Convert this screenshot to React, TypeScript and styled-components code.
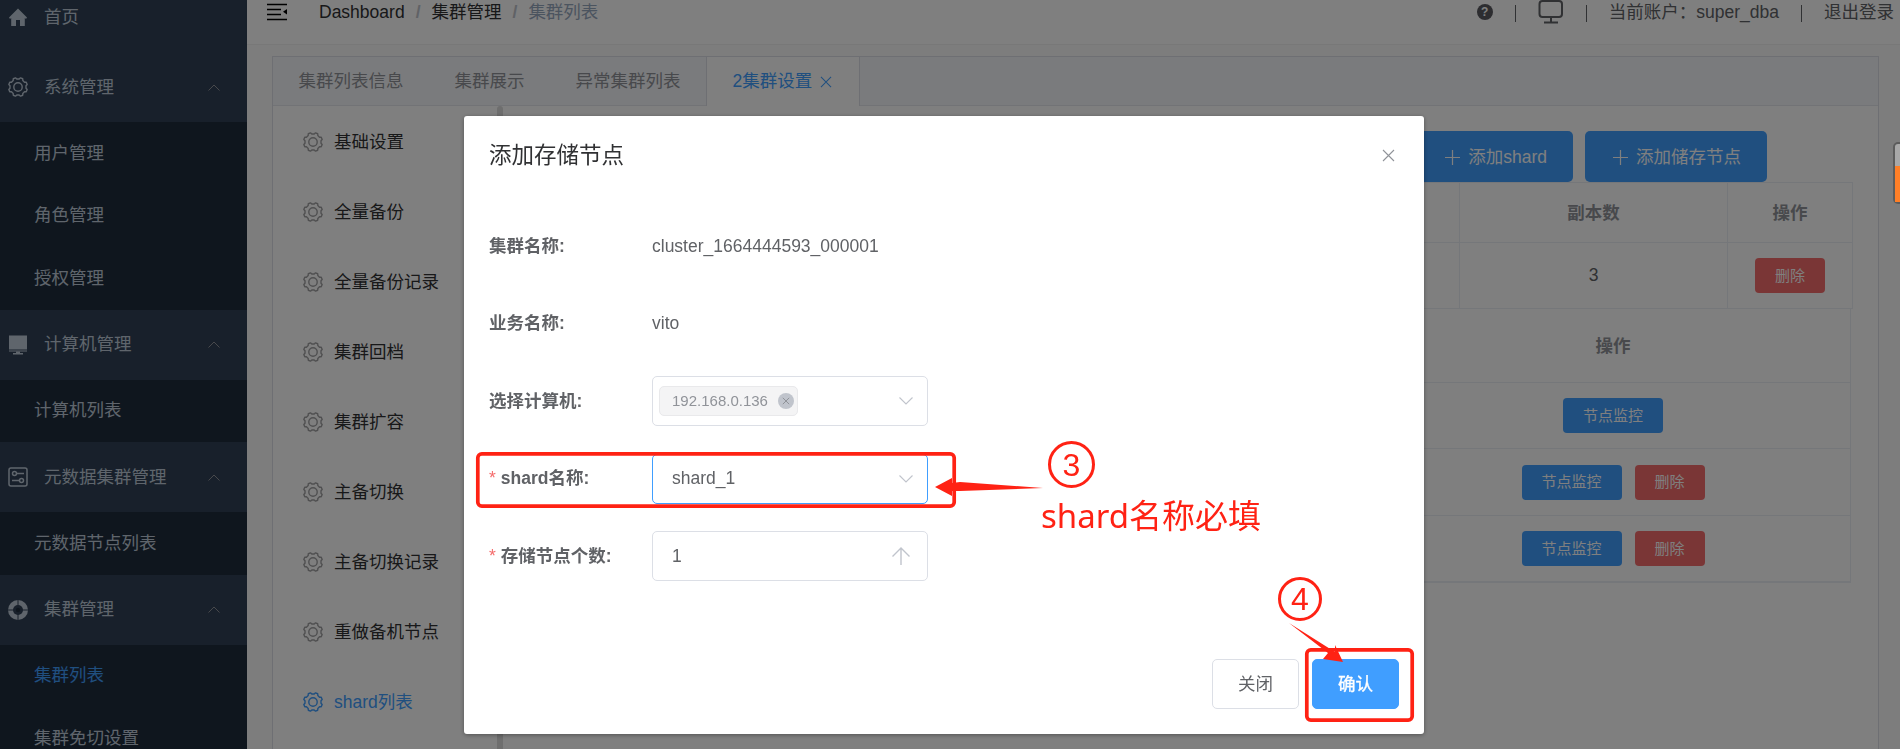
import React from "react";
import styled, { createGlobalStyle } from "styled-components";

const GlobalStyle = createGlobalStyle`
  html, body { margin: 0; padding: 0; height: 100%; overflow: hidden; background: #fff; }
  * { box-sizing: border-box; }
  body { font-family: "Liberation Sans", "Noto Sans CJK SC", sans-serif; font-size: 17.5px; line-height: 1.2; color: #606266; }
`;

const Page = styled.div`
  display: flex;
  width: 1900px;
  height: 749px;
  overflow: hidden;
`;

/* ---------- sidebar ---------- */
const Sidebar = styled.nav`
  flex: 0 0 247px;
  height: 749px;
  overflow: hidden;
  background: #304156;
`;
const SideScroll = styled.div`
  margin-top: -18px;
`;
const GroupRow = styled.div`
  display: flex;
  align-items: center;
  height: 70px;
  padding-left: 8px;
  color: #bfcbd9;
  background: #304156;
`;
const GroupIcon = styled.span`
  flex: 0 0 20px;
  min-width: 0;
  height: 20px;
  margin-right: 16px;
  display: flex;
  align-items: center;
  justify-content: center;
  color: #bfcbd9;
`;
const GroupCaret = styled.svg`
  margin-left: auto;
  margin-right: 27px;
  width: 12px;
  height: 7px;
`;
const SubList = styled.div`
  background: #1f2d3d;
`;
const SubRow = styled.div<{ $active?: boolean }>`
  display: flex;
  align-items: center;
  height: 62.5px;
  padding-left: 34px;
  color: ${(p) => (p.$active ? "#409eff" : "#bfcbd9")};
`;

/* ---------- top bar ---------- */
const Main = styled.div`
  flex: 1;
  min-width: 0;
  display: flex;
  flex-direction: column;
  height: 749px;
`;
const TopBar = styled.header`
  flex: 0 0 45px;
  display: flex;
  align-items: flex-start;
  padding: 0 6px 0 20px;
  background: #fff;
  border-bottom: 1px solid #f0f0f0;
  box-shadow: 0 1px 3px rgba(0, 21, 41, 0.06);
`;
const TopLine = styled.div`
  display: flex;
  align-items: center;
  height: 24px;
`;
const Burger = styled.svg`
  width: 20px;
  height: 18px;
  margin-right: 32px;
`;
const Crumb = styled.span<{ $last?: boolean }>`
  color: ${(p) => (p.$last ? "#97a8be" : "#303133")};
`;
const CrumbSep = styled.span`
  margin: 0 11px;
  color: #c0c4cc;
  font-weight: 700;
`;
const TopRight = styled.div`
  margin-left: auto;
  display: flex;
  align-items: center;
  height: 24px;
  gap: 22px;
  color: #606266;
`;
const HelpDot = styled.span`
  width: 16px;
  height: 16px;
  border-radius: 50%;
  background: #5a5a60;
  color: #fff;
  font-size: 12px;
  font-weight: 700;
  line-height: 16px;
  text-align: center;
`;
const VBar = styled.span`
  width: 1px;
  height: 17px;
  margin-top: 3px;
  background: #606266;
`;
const Screen = styled.svg`
  width: 26px;
  height: 24px;
`;

/* ---------- card ---------- */
const Content = styled.div`
  flex: 1;
  min-height: 0;
  padding: 11px 21px 0 25px;
  background: #fbfbfb;
  overflow: hidden;
`;
const Card = styled.section`
  height: 720px;
  background: #fff;
  border: 1px solid #dcdfe6;
`;
const TabBar = styled.div`
  display: flex;
  height: 49px;
  background: #f5f7fa;
  border-bottom: 1px solid #e4e7ed;
`;
const Tab = styled.div<{ $active?: boolean }>`
  display: flex;
  align-items: center;
  height: ${(p) => (p.$active ? "49px" : "48px")};
  padding: 0 25.5px;
  color: ${(p) => (p.$active ? "#409eff" : "#909399")};
  ${(p) =>
    p.$active &&
    `
    background: #fff;
    border-left: 1px solid #dcdfe6;
    border-right: 1px solid #dcdfe6;
    padding-right: 27px;
  `}
`;
const TabClose = styled.svg`
  width: 12px;
  height: 12px;
  margin-left: 8px;
`;
const CardBody = styled.div`
  display: flex;
  height: 670px;
`;
const SideTabs = styled.div`
  flex: 0 0 224px;
`;
const SideTab = styled.div<{ $active?: boolean }>`
  display: flex;
  align-items: center;
  height: 70px;
  padding: 2px 0 0 30px;
  gap: 11px;
  color: ${(p) => (p.$active ? "#409eff" : "#303133")};
  svg {
    color: ${(p) => (p.$active ? "#409eff" : "#a0a0a2")};
  }
`;
const Rail = styled.div`
  flex: 0 0 6px;
  background: #dcdcdc;
  border-radius: 3px 3px 0 0;
`;
const Pane = styled.div`
  flex: 1;
  min-width: 0;
  padding: 25px 25px 0 24px;
`;
const PaneActions = styled.div`
  display: flex;
  justify-content: flex-end;
  gap: 12px;
  padding-right: 86px;
`;
const AddButton = styled.div`
  display: flex;
  align-items: center;
  justify-content: center;
  gap: 8px;
  height: 51px;
  padding: 2px 26px 0 28px;
  border-radius: 5px;
  background: #409eff;
  color: #fff;
`;
const PlusIcon = styled.svg`
  width: 15px;
  height: 15px;
`;
const TableFrame = styled.div<{ $inset?: number; $heavy?: boolean }>`
  margin-right: ${(p) => p.$inset ?? 0}px;
  border: 1px solid #ebeef5;
  border-top-width: ${(p) => (p.$inset ? 0 : 1)}px;
  border-bottom-width: ${(p) => (p.$heavy ? 2 : 0)}px;
`;
const TRow = styled.div<{ $cols: string; $h: number; $line?: boolean }>`
  display: grid;
  grid-template-columns: ${(p) => p.$cols};
  height: ${(p) => p.$h}px;
  border-bottom: ${(p) => (p.$line ? "1px solid #ebeef5" : "0")};
`;
const TCell = styled.div<{ $head?: boolean }>`
  display: flex;
  align-items: center;
  justify-content: center;
  gap: 13px;
  padding-top: ${(p) => (p.$head ? 2 : 0)}px;
  border-left: 1px solid #ebeef5;
  font-weight: ${(p) => (p.$head ? 700 : 400)};
  color: ${(p) => (p.$head ? "#909399" : "#606266")};
  &:first-child {
    border-left: 0;
  }
`;
const MiniButton = styled.div<{ $danger?: boolean }>`
  display: flex;
  align-items: center;
  justify-content: center;
  width: ${(p) => (p.$danger ? 70 : 100)}px;
  height: 35px;
  border-radius: 4px;
  font-size: 15px;
  font-weight: 400;
  color: #fff;
  background: ${(p) => (p.$danger ? "#f56c6c" : "#409eff")};
`;

/* ---------- dialog ---------- */
const Overlay = styled.div`
  position: fixed;
  inset: 0;
  padding: 116px 0 0 464px;
  background: rgba(0, 0, 0, 0.5);
`;
const Dialog = styled.div`
  position: relative;
  display: flex;
  flex-direction: column;
  width: 960px;
  height: 618px;
  background: #fff;
  border-radius: 3px;
  box-shadow: 0 1px 4px rgba(0, 0, 0, 0.35);
`;
const DialogHead = styled.div`
  display: flex;
  align-items: center;
  justify-content: space-between;
  height: 79px;
  padding: 0 29px 0 25px;
  margin-bottom: 26px;
  font-size: 22.5px;
  color: #303133;
`;
const CloseIcon = styled.svg`
  width: 13px;
  height: 13px;
`;
const Form = styled.div`
  display: flex;
  flex-direction: column;
  gap: 27.5px;
  padding-left: 25px;
`;
const FormRow = styled.div`
  display: flex;
  align-items: center;
  height: 50px;
`;
const Label = styled.div`
  flex: 0 0 163px;
  font-weight: 700;
  color: #606266;
`;
const Star = styled.span`
  margin-right: 5px;
  color: #f56c6c;
  font-weight: 400;
`;
const Field = styled.div<{ $focus?: boolean }>`
  display: flex;
  align-items: center;
  justify-content: space-between;
  width: 276px;
  height: 50px;
  padding: 0 14px 0 19px;
  border: 1px solid ${(p) => (p.$focus ? "#409eff" : "#dcdfe6")};
  border-radius: 5px;
`;
const TagField = styled(Field)`
  padding-left: 6px;
`;
const Tag = styled.div`
  display: flex;
  align-items: center;
  gap: 10px;
  height: 30px;
  padding: 0 3px 0 12px;
  background: #f4f4f5;
  border: 1px solid #e9e9eb;
  border-radius: 5px;
  color: #909399;
  font-size: 15px;
`;
const TagClose = styled.svg`
  width: 16px;
  height: 16px;
`;
const Chevron = styled.svg`
  width: 14px;
  height: 8px;
`;
const UpArrow = styled.svg`
  width: 18px;
  height: 18px;
  margin-right: 3px;
`;
const DialogFoot = styled.div`
  margin-top: auto;
  display: flex;
  justify-content: flex-end;
  gap: 13px;
  padding: 0 25px 25px 0;
`;
const FootButton = styled.div<{ $primary?: boolean }>`
  display: flex;
  align-items: center;
  justify-content: center;
  width: 87px;
  height: 50px;
  border-radius: 5px;
  border: 1px solid ${(p) => (p.$primary ? "#409eff" : "#dcdfe6")};
  background: ${(p) => (p.$primary ? "#409eff" : "#fff")};
  color: ${(p) => (p.$primary ? "#fff" : "#606266")};
  -webkit-text-stroke: ${(p) => (p.$primary ? "0.35px #fff" : "0")};
`;

/* ---------- screenshot annotations ---------- */
const Marks = styled.svg`
  position: absolute;
  left: 0;
  top: 0;
  width: 960px;
  height: 618px;
  pointer-events: none;
`;
const NumberMark = styled.span<{ $x: number; $y: number; $size: number }>`
  position: absolute;
  left: ${(p) => p.$x}px;
  top: ${(p) => p.$y}px;
  width: ${(p) => p.$size}px;
  height: ${(p) => p.$size}px;
  display: flex;
  align-items: center;
  justify-content: center;
  border: 3px solid #ff2214;
  border-radius: 50%;
  color: #ff2214;
  font-size: 32px;
  line-height: 1;
`;
const MarkNote = styled.span`
  position: absolute;
  left: 577px;
  top: 377px;
  font-family: "Noto Sans", "Noto Sans CJK SC", sans-serif;
  font-size: 33px;
  line-height: 46px;
  color: #ff2214;
  white-space: nowrap;
`;
const SideWidget = styled.div`
  position: absolute;
  left: 1893px;
  top: 142px;
  width: 12px;
  height: 62px;
  padding-top: 22px;
  border: 2px solid #5c5c5c;
  border-radius: 5px;
  background: #a8a8a8;
`;
const WidgetFill = styled.div`
  height: 36px;
  background: #ff7f27;
`;

const groups = [
  { name: "系统管理", icon: "gear", items: ["用户管理", "角色管理", "授权管理"] },
  { name: "计算机管理", icon: "monitor", items: ["计算机列表"] },
  { name: "元数据集群管理", icon: "sliders", items: ["元数据节点列表"] },
  { name: "集群管理", icon: "buoy", items: ["集群列表", "集群免切设置"] },
];
const sideTabs = ["基础设置", "全量备份", "全量备份记录", "集群回档", "集群扩容", "主备切换", "主备切换记录", "重做备机节点", "shard列表"];

/* eight-toothed cog outline, as in the Element "setting" icon */
const cogPath = (() => {
  const pts: string[] = [];
  const teeth = 8;
  for (let i = 0; i < teeth; i++) {
    const a = (i / teeth) * Math.PI * 2 + Math.PI / 8;
    const w = Math.PI / teeth;
    [
      [8.1, a - w * 0.62],
      [9.5, a - w * 0.32],
      [9.5, a + w * 0.32],
      [8.1, a + w * 0.62],
    ].forEach(([r, t]) => {
      pts.push(`${(10 + r * Math.cos(t)).toFixed(2)} ${(10 + r * Math.sin(t)).toFixed(2)}`);
    });
  }
  return `M${pts.join("L")}Z`;
})();

const Cog = () => (
  <svg width="20" height="20" viewBox="0 0 20 20" fill="none" stroke="currentColor" strokeWidth="1.4" strokeLinejoin="round">
    <path d={cogPath} />
    <circle cx="10" cy="10" r="4.2" />
  </svg>
);

function MenuIcon({ kind }: { kind: string }) {
  if (kind === "home")
    return (
      <svg width="20" height="20" viewBox="0 0 20 20">
        <path d="M10 1.5 1 10.5l1 1.5 1.2-1V19h4.8v-6h4v6h4.8v-8l1.2 1 1-1.5z" fill="#bfcbd9" />
      </svg>
    );
  if (kind === "gear") return <Cog />;
  if (kind === "monitor")
    return (
      <svg width="20" height="20" viewBox="0 0 20 20">
        <rect x="1" y="0.5" width="18" height="14" fill="#bfcbd9" />
        <rect x="1" y="15.5" width="18" height="1" fill="#bfcbd9" />
        <rect x="8" y="16.5" width="4" height="1.5" fill="#bfcbd9" />
        <rect x="5" y="18" width="10" height="1.5" fill="#bfcbd9" />
      </svg>
    );
  if (kind === "sliders")
    return (
      <svg width="20" height="20" viewBox="0 0 20 20" fill="none" stroke="#bfcbd9" strokeWidth="1.5">
        <rect x="1" y="1" width="18" height="18" rx="2" />
        <circle cx="6.5" cy="6.5" r="2" />
        <path d="M8.5 6.5H16M4 13.5h7.5" />
        <circle cx="13.5" cy="13.5" r="2" />
      </svg>
    );
  return (
    <svg width="20" height="20" viewBox="0 0 20 20">
      <circle cx="10" cy="10" r="10" fill="#bfcbd9" />
      <path d="M0 10h20M10 0v20" stroke="#304156" strokeWidth="1" />
      <circle cx="10" cy="10" r="5" fill="#304156" />
      <circle cx="10" cy="10" r="2.2" fill="#1f2d3d" />
    </svg>
  );
}

const Caret = () => (
  <GroupCaret viewBox="0 0 12 7" fill="none" stroke="#909399" strokeWidth="1">
    <path d="M.5 6.5 6 1l5.5 5.5" />
  </GroupCaret>
);
const Cross = ({ color }: { color: string }) => (
  <path d="M1 1l11 11M12 1 1 12" stroke={color} strokeWidth="1.1" fill="none" />
);
const Down = () => (
  <Chevron viewBox="0 0 14 8" fill="none" stroke="#c0c4cc" strokeWidth="1.1">
    <path d="M.5.5 7 7l6.5-6.5" />
  </Chevron>
);

export default function App() {
  return (
    <>
      <GlobalStyle />
      <Page>
        <Sidebar>
          <SideScroll>
            <GroupRow>
              <GroupIcon>
                <MenuIcon kind="home" />
              </GroupIcon>
              首页
            </GroupRow>
            {groups.map((g) => (
              <React.Fragment key={g.name}>
                <GroupRow>
                  <GroupIcon>
                    <MenuIcon kind={g.icon} />
                  </GroupIcon>
                  {g.name}
                  <Caret />
                </GroupRow>
                <SubList>
                  {g.items.map((i) => (
                    <SubRow key={i} $active={i === "集群列表"}>
                      {i}
                    </SubRow>
                  ))}
                </SubList>
              </React.Fragment>
            ))}
          </SideScroll>
        </Sidebar>
        <Main>
          <TopBar>
            <TopLine>
              <Burger viewBox="0 0 20 18">
                <path d="M0 1.5h20M0 6.5h14M0 11.5h14M0 16.5h20" stroke="#000" strokeWidth="1.6" />
                <path d="M20 6v5.500l-4-2.750z" fill="#000" />
              </Burger>
              <Crumb>Dashboard</Crumb>
              <CrumbSep>/</CrumbSep>
              <Crumb>集群管理</Crumb>
              <CrumbSep>/</CrumbSep>
              <Crumb $last>集群列表</Crumb>
            </TopLine>
            <TopRight>
              <HelpDot>?</HelpDot>
              <VBar />
              <Screen viewBox="0 0 26 24" fill="none" stroke="#606266" strokeWidth="2">
                <rect x="1.500" y="1" width="22.500" height="16" rx="3" />
                <path d="M13 17v5M6 22.500h14" />
              </Screen>
              <VBar />
              <span>当前账户：super_dba</span>
              <VBar />
              <span>退出登录</span>
            </TopRight>
          </TopBar>
          <Content>
            <Card>
              <TabBar>
                <Tab>集群列表信息</Tab>
                <Tab>集群展示</Tab>
                <Tab>异常集群列表</Tab>
                <Tab $active>
                  2集群设置
                  <TabClose viewBox="0 0 13 13">
                    <Cross color="#409eff" />
                  </TabClose>
                </Tab>
              </TabBar>
              <CardBody>
                <SideTabs>
                  {sideTabs.map((t) => (
                    <SideTab key={t} $active={t === "shard列表"}>
                      <Cog />
                      {t}
                    </SideTab>
                  ))}
                </SideTabs>
                <Rail />
                <Pane>
                  <PaneActions>
                    <AddButton>
                      <PlusIcon viewBox="0 0 16 16">
                        <path d="M8 0v16M0 8h16" stroke="#fff" strokeWidth="1.3" />
                      </PlusIcon>
                      添加shard
                    </AddButton>
                    <AddButton>
                      <PlusIcon viewBox="0 0 16 16">
                        <path d="M8 0v16M0 8h16" stroke="#fff" strokeWidth="1.3" />
                      </PlusIcon>
                      添加储存节点
                    </AddButton>
                  </PaneActions>
                  <TableFrame>
                    <TRow $cols="1fr 268px 125px" $h={60} $line>
                      <TCell $head />
                      <TCell $head>副本数</TCell>
                      <TCell $head>操作</TCell>
                    </TRow>
                    <TRow $cols="1fr 268px 125px" $h={66} $line>
                      <TCell />
                      <TCell>3</TCell>
                      <TCell>
                        <MiniButton $danger>删除</MiniButton>
                      </TCell>
                    </TRow>
                  </TableFrame>
                  <TableFrame $inset={2} $heavy>
                    <TRow $cols="1fr 475px" $h={74} $line>
                      <TCell $head />
                      <TCell $head>操作</TCell>
                    </TRow>
                    <TRow $cols="1fr 475px" $h={66} $line>
                      <TCell />
                      <TCell>
                        <MiniButton>节点监控</MiniButton>
                      </TCell>
                    </TRow>
                    <TRow $cols="1fr 475px" $h={67} $line>
                      <TCell />
                      <TCell>
                        <MiniButton>节点监控</MiniButton>
                        <MiniButton $danger>删除</MiniButton>
                      </TCell>
                    </TRow>
                    <TRow $cols="1fr 475px" $h={65}>
                      <TCell />
                      <TCell>
                        <MiniButton>节点监控</MiniButton>
                        <MiniButton $danger>删除</MiniButton>
                      </TCell>
                    </TRow>
                  </TableFrame>
                </Pane>
              </CardBody>
            </Card>
          </Content>
        </Main>
      </Page>
      <Overlay>
        <Dialog>
          <DialogHead>
            添加存储节点
            <CloseIcon viewBox="0 0 13 13">
              <Cross color="#909399" />
            </CloseIcon>
          </DialogHead>
          <Form>
            <FormRow>
              <Label>集群名称:</Label>
              <span>cluster_1664444593_000001</span>
            </FormRow>
            <FormRow>
              <Label>业务名称:</Label>
              <span>vito</span>
            </FormRow>
            <FormRow>
              <Label>选择计算机:</Label>
              <TagField>
                <Tag>
                  192.168.0.136
                  <TagClose viewBox="0 0 16 16">
                    <circle cx="8" cy="8" r="8" fill="#c0c4cc" />
                    <path d="M4.800 4.800l6.400 6.400M11.200 4.800l-6.400 6.400" stroke="#909399" strokeWidth="1" />
                  </TagClose>
                </Tag>
                <Down />
              </TagField>
            </FormRow>
            <FormRow>
              <Label>
                <Star>*</Star>shard名称:
              </Label>
              <Field $focus>
                shard_1
                <Down />
              </Field>
            </FormRow>
            <FormRow>
              <Label>
                <Star>*</Star>存储节点个数:
              </Label>
              <Field>
                1
                <UpArrow viewBox="0 0 18 18" fill="none" stroke="#c0c4cc" strokeWidth="1.4">
                  <path d="M.5 9.500 9 1l8.500 8.500M9 1v17" />
                </UpArrow>
              </Field>
            </FormRow>
          </Form>
          <DialogFoot>
            <FootButton>关闭</FootButton>
            <FootButton $primary>确认</FootButton>
          </DialogFoot>
          <Marks viewBox="464 116 960 618">
            <rect x="477.800" y="453.800" width="476.400" height="52.400" rx="4" fill="none" stroke="#ff2214" strokeWidth="3.700" />
            <path d="M935 487 952 478 952 483 960 482 1043 488 960 491 952 491 952 496Z" fill="#ff2214" />
            <rect x="1306.800" y="649.800" width="105.400" height="70.400" rx="4" fill="none" stroke="#ff2214" strokeWidth="3.700" />
            <path d="M1289 623 1335 652 1335 645 1343 662 1323 659 1328 653Z" fill="#ff2214" />
          </Marks>
          <NumberMark $x={584} $y={325} $size={47}>
            3
          </NumberMark>
          <MarkNote>shard名称必填</MarkNote>
          <NumberMark $x={814} $y={461} $size={44}>
            4
          </NumberMark>
        </Dialog>
        <SideWidget>
          <WidgetFill />
        </SideWidget>
      </Overlay>
    </>
  );
}
